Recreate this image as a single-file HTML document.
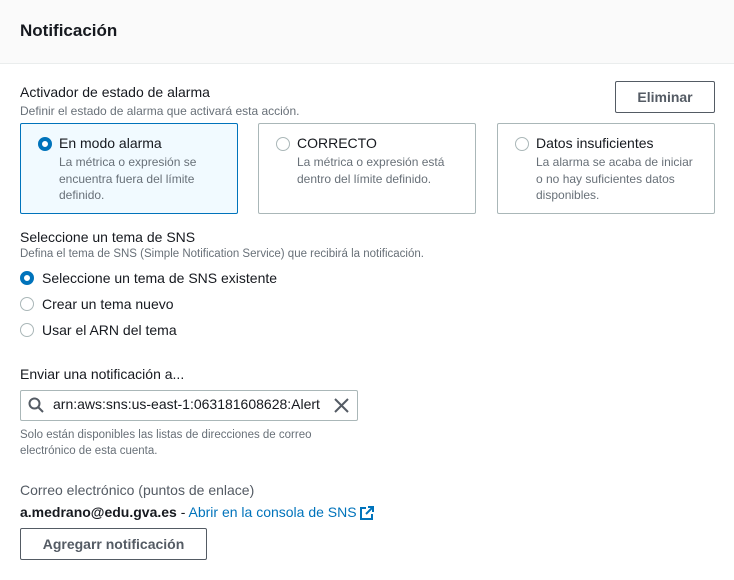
<!DOCTYPE html>
<html><head><meta charset="utf-8"><style>
*{margin:0;padding:0;box-sizing:border-box}
body{width:734px;height:580px;background:#fff;font-family:"Liberation Sans",sans-serif;color:#16191f;position:relative;overflow:hidden}
.a{position:absolute;white-space:nowrap}
.hdr{position:absolute;left:0;top:0;width:734px;height:64px;background:#fafafa;border-bottom:1px solid #eaeded}
.s{font-size:12px;color:#687078}
.card{position:absolute;top:123px;height:91px;width:218px;border:1px solid #aab7b8;border-radius:2px}
.card.on{background:#f1faff;border-color:#0073bb}
.rad{position:absolute;width:14px;height:14px;border-radius:50%;border:1px solid #aab7b8;background:#fff}
.rad.on{border:4px solid #0073bb}
.ct{position:absolute;left:38px;top:11px;font-size:14px}
.cd{position:absolute;left:38px;top:30px;font-size:12px;color:#687078;line-height:16.5px;white-space:normal;width:165px}
.btn{position:absolute;border:1px solid #545b64;border-radius:2px;font-weight:bold;font-size:14px;color:#545b64;text-align:center;background:#fff}
</style></head><body>
<div class="hdr"></div>
<div class="a" style="left:20px;top:21px;font-size:17px;font-weight:bold">Notificación</div>
<div class="a" style="left:20px;top:84px;font-size:14px">Activador de estado de alarma</div>
<div class="a s" style="left:20px;top:104px">Definir el estado de alarma que activará esta acción.</div>
<div class="btn" style="left:615px;top:81px;width:100px;height:32px;line-height:30px">Eliminar</div>

<div class="card on" style="left:20px"><div class="rad on" style="left:17px;top:13px"></div><div class="ct">En modo alarma</div><div class="cd">La métrica o expresión se encuentra fuera del límite definido.</div></div>
<div class="card" style="left:258px"><div class="rad" style="left:17px;top:13px"></div><div class="ct">CORRECTO</div><div class="cd">La métrica o expresión está dentro del límite definido.</div></div>
<div class="card" style="left:497px"><div class="rad" style="left:17px;top:13px"></div><div class="ct">Datos insuficientes</div><div class="cd">La alarma se acaba de iniciar<br>o no hay suficientes datos disponibles.</div></div>

<div class="a" style="left:20px;top:229px;font-size:14px">Seleccione un tema de SNS</div>
<div class="a s" style="left:20px;top:248px;font-size:11.5px">Defina el tema de SNS (Simple Notification Service) que recibirá la notificación.</div>
<div class="rad on" style="left:20px;top:271px"></div><div class="a" style="left:42px;top:270px;font-size:14px">Seleccione un tema de SNS existente</div>
<div class="rad" style="left:20px;top:297px"></div><div class="a" style="left:42px;top:296px;font-size:14px">Crear un tema nuevo</div>
<div class="rad" style="left:20px;top:323px"></div><div class="a" style="left:42px;top:322px;font-size:14px">Usar el ARN del tema</div>

<div class="a" style="left:20px;top:366px;font-size:14px">Enviar una notificación a...</div>
<div class="a" style="left:20px;top:390px;width:338px;height:31px;border:1px solid #aab7b8;border-radius:2px"></div>
<svg class="a" style="left:28px;top:397px" width="16" height="16" viewBox="0 0 16 16"><circle cx="6.5" cy="6.5" r="5" fill="none" stroke="#545b64" stroke-width="2"/><path d="M10.5 10.5L15 15" stroke="#545b64" stroke-width="2"/></svg>
<div class="a" style="left:53px;top:396px;font-size:14px">arn:aws:sns:us-east-1:063181608628:Alert</div>
<svg class="a" style="left:334px;top:398px" width="15" height="15" viewBox="0 0 15 15"><path d="M1 1L14 14M14 1L1 14" stroke="#545b64" stroke-width="2"/></svg>
<div class="a s" style="left:20px;top:427px;font-size:11.5px;line-height:16px">Solo están disponibles las listas de direcciones de correo<br>electrónico de esta cuenta.</div>

<div class="a" style="left:20px;top:482px;font-size:14px;color:#545b64">Correo electrónico (puntos de enlace)</div>
<div class="a" style="left:20px;top:504px;font-size:14px"><b>a.medrano@edu.gva.es</b> - <span style="color:#0073bb">Abrir en la consola de SNS</span></div>
<svg class="a" style="left:359px;top:506px" width="15" height="15" viewBox="0 0 15 15"><path d="M7 2H2v11h11V8" fill="none" stroke="#0073bb" stroke-width="2"/><path d="M9 1h5v5M14 1L7 8" fill="none" stroke="#0073bb" stroke-width="2"/></svg>
<div class="btn" style="left:20px;top:528px;width:187px;height:32px;line-height:30px">Agregarr notificación</div>
</body></html>
